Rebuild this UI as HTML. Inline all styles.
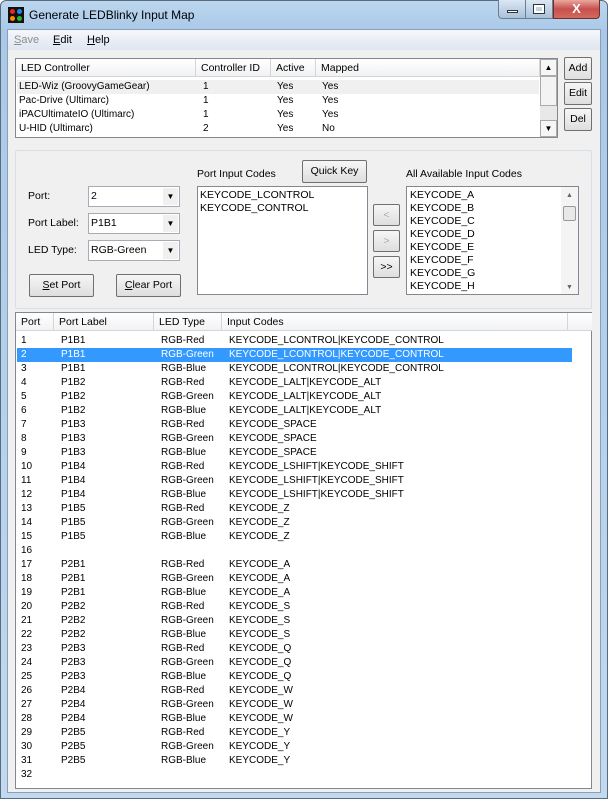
<!DOCTYPE html>
<html><head><meta charset="utf-8"><style>
*{margin:0;padding:0;box-sizing:border-box}
body{width:608px;height:799px;overflow:hidden;font-family:"Liberation Sans",sans-serif;font-size:10px;color:#000;background:#fff;position:relative}
.a{position:absolute}
.frame{left:0;top:0;width:608px;height:799px;background:linear-gradient(180deg,#bcd6ee 0,#a9c9e8 30px,#b7d2ec 60%,#c2d9ef 100%);border:1px solid #5b6b7e;border-radius:6px 6px 0 0}
.client{left:7px;top:29px;width:594px;height:764px;background:#f0f0f0;border:1px solid #8aa0b8}
.menu{left:8px;top:30px;width:592px;height:20px;background:linear-gradient(#f5f7fb,#dfe6f1);font-size:11px}
.menu span{position:absolute;top:4px}
.btn{position:absolute;background:linear-gradient(#f6f6f6,#dedede);border:1px solid #707070;border-radius:2px;text-align:center;line-height:20px;font-size:10.5px}
.list{position:absolute;background:#fff;border:1px solid #828790}
.hdr{position:absolute;top:0;height:18px;background:linear-gradient(#fff,#f1f2f4);border-bottom:1px solid #d5d5d5;border-right:1px solid #d5d5d5;line-height:18px;padding-left:5px;font-size:10.5px}
.row{position:absolute;height:14px;line-height:14px;white-space:nowrap}
.row span{position:absolute}
.combo{position:absolute;width:92px;height:21px;background:#fff;border:1px solid #a5acb5;line-height:19px;padding-left:2px;font-size:10.5px}
.combo b{position:absolute;right:1px;top:1px;width:15px;height:17px;font-weight:normal;font-size:8px;text-align:center;line-height:17px;background:#f0f0f0}
.grp{position:absolute;border:1px solid #d5dfe5;border-radius:2px}
.lbl{font-size:10.5px}
u{text-decoration:underline}
</style></head><body>
<div class="a frame"></div>
<div class="a" style="left:8px;top:7px;width:16px;height:16px;background:#111">
<div class="a" style="left:2px;top:2px;width:5px;height:5px;border-radius:3px;background:#e22"></div>
<div class="a" style="left:9px;top:2px;width:5px;height:5px;border-radius:3px;background:#28e"></div>
<div class="a" style="left:2px;top:9px;width:5px;height:5px;border-radius:3px;background:#f80"></div>
<div class="a" style="left:9px;top:9px;width:5px;height:5px;border-radius:3px;background:#2b2"></div></div>
<div class="a" style="left:29px;top:8px;font-size:12px">Generate LEDBlinky Input Map</div>
<div class="a" style="left:498px;top:0;width:28px;height:19px;border:1px solid #6d7e93;border-top:0;border-radius:0 0 0 4px;background:linear-gradient(#dbe7f4,#a9c0da)"><div class="a" style="left:8px;top:10px;width:11px;height:3px;background:#fff;border:1px solid #333"></div></div>
<div class="a" style="left:526px;top:0;width:27px;height:19px;border:1px solid #6d7e93;border-top:0;border-left:0;background:linear-gradient(#dbe7f4,#a9c0da)"><div class="a" style="left:8px;top:5px;width:10px;height:8px;border:2px solid #fff;outline:1px solid #333"></div></div>
<div class="a" style="left:553px;top:0;width:47px;height:19px;border:1px solid #6d3030;border-top:0;border-radius:0 0 4px 0;background:linear-gradient(#e9a99d,#c75050 50%,#d46a5a);color:#fff;font-weight:bold;font-size:13px;text-align:center;line-height:17px">X</div>
<div class="a client"></div>
<div class="a menu"><span style="left:6px;color:#8d8d8d"><u>S</u>ave</span><span style="left:45px"><u>E</u>dit</span><span style="left:79px"><u>H</u>elp</span></div>

<div class="list" style="left:15px;top:58px;width:543px;height:80px">
<div class="hdr" style="left:0;width:180px">LED Controller</div>
<div class="hdr" style="left:180px;width:75px">Controller ID</div>
<div class="hdr" style="left:255px;width:45px">Active</div>
<div class="hdr" style="left:300px;width:224px">Mapped</div>
<div class="row" style="left:1px;top:21px;width:522px;background:#f0f0f0"><span style="left:2px">LED-Wiz (GroovyGameGear)</span><span style="left:186px">1</span><span style="left:260px">Yes</span><span style="left:305px">Yes</span></div>
<div class="row" style="left:1px;top:35px"><span style="left:2px">Pac-Drive (Ultimarc)</span><span style="left:186px">1</span><span style="left:260px">Yes</span><span style="left:305px">Yes</span></div>
<div class="row" style="left:1px;top:49px"><span style="left:2px">iPACUltimateIO (Ultimarc)</span><span style="left:186px">1</span><span style="left:260px">Yes</span><span style="left:305px">Yes</span></div>
<div class="row" style="left:1px;top:63px"><span style="left:2px">U-HID (Ultimarc)</span><span style="left:186px">2</span><span style="left:260px">Yes</span><span style="left:305px">No</span></div>
<div class="a" style="left:524px;top:0;width:17px;height:78px;background:#e8e8e8"><div class="a" style="left:0;top:0;width:17px;height:17px;background:#f6f6f6;border:1px solid #aaa;font-size:8px;text-align:center;line-height:15px">▲</div><div class="a" style="left:0;top:17px;width:17px;height:30px;background:#f3f3f3;border:1px solid #aaa"></div><div class="a" style="left:0;top:61px;width:17px;height:17px;background:#f6f6f6;border:1px solid #aaa;font-size:8px;text-align:center;line-height:15px">▼</div></div>
</div>
<div class="btn" style="left:564px;top:57px;width:28px;height:23px">Add</div>
<div class="btn" style="left:564px;top:82px;width:28px;height:23px">Edit</div>
<div class="btn" style="left:564px;top:108px;width:28px;height:23px">Del</div>

<div class="grp" style="left:15px;top:150px;width:577px;height:159px"></div>
<div class="a lbl" style="left:28px;top:190px">Port:</div>
<div class="a lbl" style="left:28px;top:217px">Port Label:</div>
<div class="a lbl" style="left:28px;top:244px">LED Type:</div>
<div class="combo" style="left:88px;top:186px">2<b>▼</b></div>
<div class="combo" style="left:88px;top:213px">P1B1<b>▼</b></div>
<div class="combo" style="left:88px;top:240px">RGB-Green<b>▼</b></div>
<div class="btn" style="left:29px;top:274px;width:65px;height:23px"><u>S</u>et Port</div>
<div class="btn" style="left:116px;top:274px;width:65px;height:23px"><u>C</u>lear Port</div>
<div class="a lbl" style="left:197px;top:168px">Port Input Codes</div>
<div class="btn" style="left:302px;top:160px;width:65px;height:23px">Quick Key</div>
<div class="list" style="left:197px;top:186px;width:171px;height:109px;padding:2px 2px;line-height:13px;font-size:10.5px">KEYCODE_LCONTROL<br>KEYCODE_CONTROL</div>
<div class="btn" style="left:373px;top:204px;width:27px;height:22px;color:#aaa">&lt;</div>
<div class="btn" style="left:373px;top:230px;width:27px;height:22px;color:#aaa">&gt;</div>
<div class="btn" style="left:373px;top:256px;width:27px;height:22px">&gt;&gt;</div>
<div class="a lbl" style="left:406px;top:168px">All Available Input Codes</div>
<div class="list" style="left:406px;top:186px;width:173px;height:109px;padding:2px 3px;line-height:13px;font-size:10.5px">KEYCODE_A<br>KEYCODE_B<br>KEYCODE_C<br>KEYCODE_D<br>KEYCODE_E<br>KEYCODE_F<br>KEYCODE_G<br>KEYCODE_H
<div class="a" style="left:154px;top:0;width:17px;height:107px;background:#f4f4f4"><div class="a" style="left:0;top:2px;width:17px;font-size:7px;color:#666;text-align:center">▲</div><div class="a" style="left:2px;top:19px;width:13px;height:15px;background:#e8e8e8;border:1px solid #999;border-radius:2px"></div><div class="a" style="left:0;top:94px;width:17px;font-size:7px;color:#666;text-align:center">▼</div></div></div>

<div class="list" style="left:15px;top:312px;width:577px;height:477px">
<div class="hdr" style="left:0;width:38px">Port</div>
<div class="hdr" style="left:38px;width:100px">Port Label</div>
<div class="hdr" style="left:138px;width:68px">LED Type</div>
<div class="hdr" style="left:206px;width:346px">Input Codes</div>
<div class="hdr" style="left:552px;width:24px;border-right:0"></div>
<div id="rows"></div>
</div>
<script>
var d=[["1","P1B1","RGB-Red","KEYCODE_LCONTROL|KEYCODE_CONTROL"],["2","P1B1","RGB-Green","KEYCODE_LCONTROL|KEYCODE_CONTROL"],["3","P1B1","RGB-Blue","KEYCODE_LCONTROL|KEYCODE_CONTROL"],["4","P1B2","RGB-Red","KEYCODE_LALT|KEYCODE_ALT"],["5","P1B2","RGB-Green","KEYCODE_LALT|KEYCODE_ALT"],["6","P1B2","RGB-Blue","KEYCODE_LALT|KEYCODE_ALT"],["7","P1B3","RGB-Red","KEYCODE_SPACE"],["8","P1B3","RGB-Green","KEYCODE_SPACE"],["9","P1B3","RGB-Blue","KEYCODE_SPACE"],["10","P1B4","RGB-Red","KEYCODE_LSHIFT|KEYCODE_SHIFT"],["11","P1B4","RGB-Green","KEYCODE_LSHIFT|KEYCODE_SHIFT"],["12","P1B4","RGB-Blue","KEYCODE_LSHIFT|KEYCODE_SHIFT"],["13","P1B5","RGB-Red","KEYCODE_Z"],["14","P1B5","RGB-Green","KEYCODE_Z"],["15","P1B5","RGB-Blue","KEYCODE_Z"],["16","","",""],["17","P2B1","RGB-Red","KEYCODE_A"],["18","P2B1","RGB-Green","KEYCODE_A"],["19","P2B1","RGB-Blue","KEYCODE_A"],["20","P2B2","RGB-Red","KEYCODE_S"],["21","P2B2","RGB-Green","KEYCODE_S"],["22","P2B2","RGB-Blue","KEYCODE_S"],["23","P2B3","RGB-Red","KEYCODE_Q"],["24","P2B3","RGB-Green","KEYCODE_Q"],["25","P2B3","RGB-Blue","KEYCODE_Q"],["26","P2B4","RGB-Red","KEYCODE_W"],["27","P2B4","RGB-Green","KEYCODE_W"],["28","P2B4","RGB-Blue","KEYCODE_W"],["29","P2B5","RGB-Red","KEYCODE_Y"],["30","P2B5","RGB-Green","KEYCODE_Y"],["31","P2B5","RGB-Blue","KEYCODE_Y"],["32","","",""]];
var h="";d.forEach(function(r,i){var s=i==1?"background:#3399ff;color:#fff;":"";h+='<div class="row" style="'+s+'left:1px;top:'+(21+i*14)+'px;width:555px"><span style="left:4px">'+r[0]+'</span><span style="left:44px">'+r[1]+'</span><span style="left:144px">'+r[2]+'</span><span style="left:212px">'+r[3]+'</span></div>';});
document.getElementById("rows").outerHTML=h;
</script>
</body></html>
